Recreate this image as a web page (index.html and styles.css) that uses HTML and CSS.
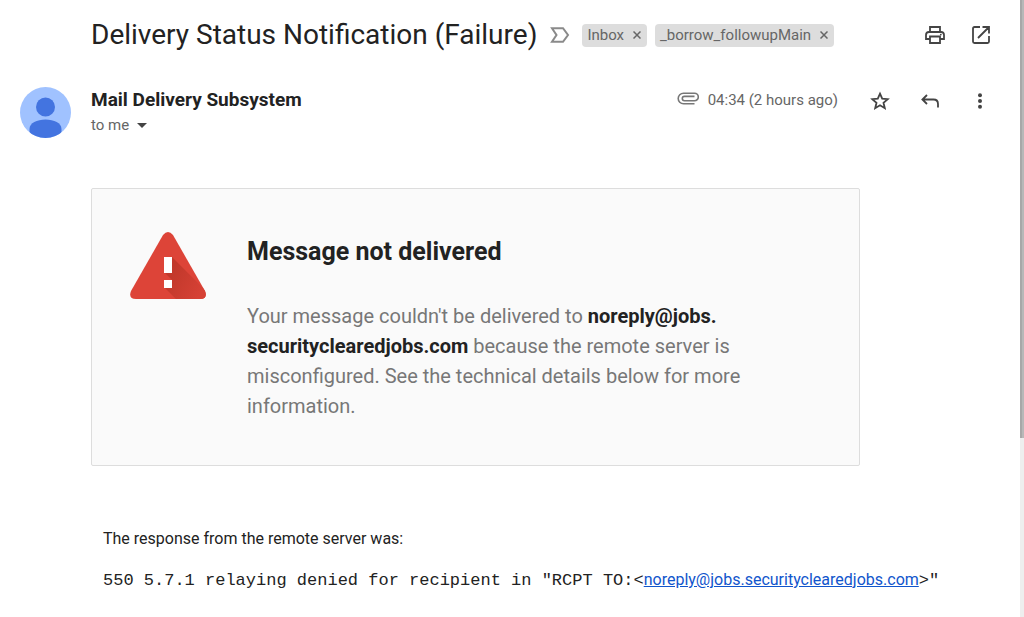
FILE: index.html
```
<!DOCTYPE html>
<html lang="en">
<head>
    <meta charset="UTF-8">
    <title>Delivery Status Notification (Failure)</title>
    <link rel="stylesheet" href="styles.css">
</head>
<body>
<main class="mail">
    <header class="subject">
        <h1>Delivery Status Notification (Failure)</h1>
        <svg class="marker" width="20" height="16" viewBox="0 0 20 16"><path d="M2 1.2H13L18 8L13 14.8H2L6.5 8Z" fill="none" stroke="#8a8a8a" stroke-width="2"/></svg>
        <span class="label">Inbox <button type="button" aria-label="Remove label Inbox"><svg width="8" height="8" viewBox="0 0 8 8"><path d="M.5.5l7 7M7.5.5l-7 7"/></svg></button></span>
        <span class="label">_borrow_followupMain <button type="button" aria-label="Remove label _borrow_followupMain"><svg width="8" height="8" viewBox="0 0 8 8"><path d="M.5.5l7 7M7.5.5l-7 7"/></svg></button></span>
        <div class="tools">
            <button type="button" aria-label="Print all">
                <svg width="20" height="18" viewBox="0 0 20 18" fill="none" stroke="#444" stroke-width="1.8">
                    <path d="M5 5.5V1H15V5.5M5 13H1V9Q1 6 4 6H16Q19 6 19 9V13H15M5 10.5H15V17H5Z"/>
                    <circle cx="15.8" cy="8.6" r=".9" fill="#444" stroke="none"/>
                </svg>
            </button>
            <button type="button" aria-label="In new window">
                <svg width="20" height="20" viewBox="0 0 20 20" fill="none" stroke="#444" stroke-width="1.8">
                    <path d="M9 2H3.5Q2 2 2 3.5V16.5Q2 18 3.5 18H16.5Q18 18 18 16.5V11M11.5 2H18V8.5M18 2L7 13"/>
                </svg>
            </button>
        </div>
    </header>

    <section class="sender">
        <svg class="avatar" width="51" height="51" viewBox="0 0 51 51">
            <clipPath id="round"><circle cx="25.5" cy="25.5" r="25.5"/></clipPath>
            <g clip-path="url(#round)">
                <rect width="51" height="51" fill="#a0c2ff"/>
                <circle cx="25.5" cy="20" r="9.5" fill="#4374e0"/>
                <path d="M9.5 51V42C9.5 36 17 32.5 25.5 32.5S41.5 36 41.5 42V51Z" fill="#4374e0"/>
            </g>
        </svg>
        <div class="who">
            <h2>Mail Delivery Subsystem</h2>
            <button type="button" class="to">to me <span class="arrow"></span></button>
        </div>
        <svg class="clip" width="22" height="13" viewBox="0 0 22 13" fill="none" stroke="#777" stroke-width="1.6"><path d="M17.5 11.8H6.5A5.3 5.3 0 0 1 6.5 1.2H17.5A3.7 3.7 0 0 1 17.5 8.8H7.5A2.2 2.2 0 0 1 7.5 4.4H17.5"/></svg>
        <time>04:34 (2 hours ago)</time>
        <div class="tools">
            <button type="button" aria-label="Star">
                <svg width="20" height="20" viewBox="0 0 20 20" fill="none" stroke="#444" stroke-width="1.8"><path d="M10 2.7L12.2 7.7L17.7 8.2L13.5 11.8L14.8 17.2L10 14.3L5.2 17.2L6.5 11.8L2.3 8.2L7.8 7.7Z"/></svg>
            </button>
            <button type="button" aria-label="Reply">
                <svg width="20" height="16" viewBox="0 0 20 16" fill="none" stroke="#444" stroke-width="1.8"><path d="M7 2L2.4 6.500L7 11M2.500 6.500H13.500Q18 6.500 18 11V14.500"/></svg>
            </button>
            <button type="button" aria-label="More">
                <svg width="6" height="16" viewBox="0 0 6 16" fill="#444"><circle cx="3" cy="2.3" r="2"/><circle cx="3" cy="8" r="2"/><circle cx="3" cy="13.7" r="2"/></svg>
            </button>
        </div>
    </section>

    <article class="content">
        <div class="notice">
            <svg class="warning" width="76" height="67" viewBox="0 0 76 67">
                <defs>
                    <clipPath id="tri"><path d="M33 3Q38-3 43 3L75 59Q78 67 70 67H6Q-2 67 1 59Z"/></clipPath>
                    <linearGradient id="shade" gradientUnits="userSpaceOnUse" x1="38" y1="45" x2="70" y2="62">
                        <stop offset="0" stop-color="#c1382b"/>
                        <stop offset="1" stop-color="#d64135"/>
                    </linearGradient>
                </defs>
                <g clip-path="url(#tri)">
                    <rect width="76" height="67" fill="#dd4438"/>
                    <path d="M42 25L84 67H46L34 55L42 48L34 40Z" fill="url(#shade)"/>
                </g>
                <path d="M34 25h8v16h-8zM34 48h8v8h-8z" fill="#fff"/>
            </svg>
            <div class="text">
                <h3>Message not delivered</h3>
                <p>Your message couldn't be delivered to <b>noreply@jobs.</b><wbr><b>securityclearedjobs.com</b> because the remote server is misconfigured. See the technical details below for more information.</p>
            </div>
        </div>
        <div class="response">
            <p>The response from the remote server was:</p>
            <p class="code">550 5.7.1 relaying denied for recipient in "RCPT TO:&lt;<a href="mailto:noreply@jobs.securityclearedjobs.com">noreply@jobs.securityclearedjobs.com</a>&gt;"</p>
        </div>
    </article>
</main>
<div class="scroll"><div class="thumb"></div></div>
</body>
</html>
```
FILE: styles.css
```
* {
    box-sizing: border-box;
}

body {
    margin: 0;
    display: flex;
    min-height: 100vh;
    background: #fff;
    color: #222;
    font-family: Roboto, "Liberation Sans", sans-serif;
}

h1, h2, h3, p {
    margin: 0;
}

svg {
    display: block;
}

button {
    margin: 0;
    padding: 0;
    border: 0;
    background: none;
    font: inherit;
    color: inherit;
    cursor: pointer;
}

.mail {
    flex: 1;
    min-width: 0;
}

.subject {
    display: flex;
    align-items: center;
    height: 70px;
    padding: 0 19px 0 91px;
}

.subject h1 {
    font-size: 28px;
    font-weight: 400;
    line-height: 36px;
    white-space: nowrap;
}

.marker {
    margin: 0 12px 0 13px;
}

.label {
    display: flex;
    align-items: center;
    gap: 9px;
    height: 23px;
    margin-right: 8px;
    padding: 0 6px 0 5px;
    border-radius: 4px;
    background: #ddd;
    color: #666;
    font-size: 15px;
    white-space: nowrap;
}

.label svg {
    fill: none;
    stroke: #666;
    stroke-width: 1.5;
}

.tools {
    display: flex;
    align-items: center;
    gap: 6px;
}

.subject .tools {
    margin-left: auto;
}

.tools button {
    display: flex;
    align-items: center;
    justify-content: center;
    width: 40px;
    height: 40px;
}

.sender {
    display: flex;
    padding: 17px 20px 0;
}

.who {
    flex: 1;
    margin-left: 20px;
}

.who h2 {
    font-size: 19px;
    font-weight: 700;
    line-height: 26px;
}

.to {
    display: flex;
    align-items: center;
    gap: 8px;
    color: #666;
    font-size: 15px;
    line-height: 24px;
}

.arrow {
    border: 5px solid transparent;
    border-top-color: #444;
    border-bottom: 0;
}

.clip {
    margin-top: 5px;
}

time {
    margin: 0 22px 0 9px;
    color: #666;
    font-size: 15px;
    line-height: 26px;
}

.sender .tools {
    height: 28px;
    gap: 10px;
}

.content {
    padding: 50px 80px 24px 91px;
}

.notice {
    display: flex;
    max-width: 769px;
    padding: 43px 80px 44px 38px;
    border: 1px solid #ddd;
    border-radius: 2px;
    background: #fafafa;
}

.warning {
    flex: none;
    margin-right: 41px;
}

.notice h3 {
    margin-bottom: 29px;
    font-size: 25px;
    font-weight: 700;
    line-height: 40px;
}

.notice p {
    max-width: 510px;
    color: #777;
    font-size: 20px;
    line-height: 30px;
}

.notice b {
    color: #222;
}

.response {
    margin: 62px 0 0 12px;
    font-size: 16px;
    line-height: 22px;
}

.response .code {
    margin-top: 19px;
    font-family: "Liberation Mono", monospace;
    font-size: 17px;
    white-space: nowrap;
}

.response a {
    color: #15c;
    font-family: Roboto, sans-serif;
    font-size: 16px;
}

.scroll {
    width: 4px;
    background: #eee;
}

.thumb {
    height: 71vh;
    background: #b8b8b8;
    border-left: 2px solid #a8a8a8;
}
```
